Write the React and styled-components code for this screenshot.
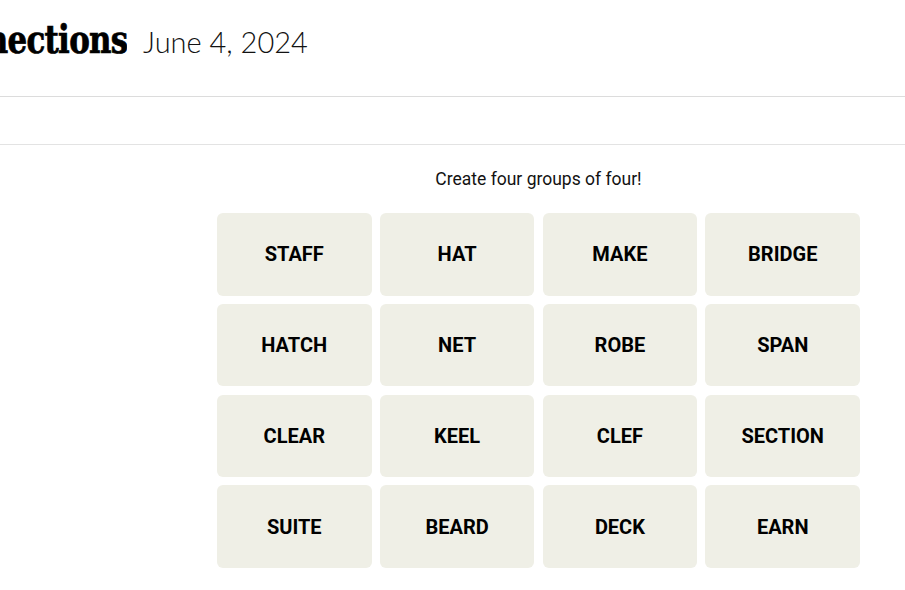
import React from 'react'
import styled, { createGlobalStyle } from 'styled-components'

const GlobalStyle = createGlobalStyle`
  html, body {
    margin: 0;
    padding: 0;
    background: #ffffff;
    overflow: hidden;
  }
  body {
    font-family: Roboto, "Liberation Sans", sans-serif;
    color: #000;
  }
`

const words = [
  'STAFF', 'HAT', 'MAKE', 'BRIDGE',
  'HATCH', 'NET', 'ROBE', 'SPAN',
  'CLEAR', 'KEEL', 'CLEF', 'SECTION',
  'SUITE', 'BEARD', 'DECK', 'EARN',
]

const Header = styled.header`
  height: 97px;
  box-sizing: border-box;
  display: flex;
  align-items: baseline;
  padding-top: 20px;
  border-bottom: 1px solid #dcdcdc;
`

const TitleClip = styled.div`
  width: 127px;
  display: flex;
  justify-content: flex-end;
  overflow: hidden;
`

const Title = styled.h1`
  margin: 0;
  white-space: nowrap;
  font-family: "DejaVu Serif Condensed", "DejaVu Serif", "Liberation Serif", serif;
  font-stretch: condensed;
  font-weight: 700;
  font-size: 39px;
  line-height: 1;
  letter-spacing: -0.8px;
  -webkit-text-stroke: 0.7px #000;
  transform: scaleX(0.88);
  transform-origin: right center;
`

const DateText = styled.span`
  margin-left: 16px;
  font-family: Lato, "Open Sans", sans-serif;
  font-weight: 300;
  font-size: 29px;
  line-height: 1;
  color: #121212;
`

const Toolbar = styled.div`
  height: 47px;
  border-bottom: 1px solid #e3e3e3;
`

const Main = styled.main`
  margin-left: 217px;
  width: 643px;
  padding-top: 24px;
`

const Prompt = styled.p`
  margin: 0 0 23px;
  text-align: center;
  font-size: 17.5px;
  line-height: 21px;
  color: #121212;
`

const Board = styled.div`
  display: grid;
  grid-template-columns: repeat(4, 1fr);
  grid-auto-rows: 82.5px;
  gap: 8.3px;
`

const Tile = styled.button`
  border: none;
  margin: 0;
  padding: 0;
  border-radius: 6px;
  background: #efefe6;
  color: #000;
  font-family: Roboto, "Liberation Sans", sans-serif;
  font-weight: 700;
  font-size: 20px;
  text-transform: uppercase;
  display: flex;
  align-items: center;
  justify-content: center;
`

export default function App() {
  return (
    <>
      <GlobalStyle />
      <Header>
        <TitleClip>
          <Title>Connections</Title>
        </TitleClip>
        <DateText>June 4, 2024</DateText>
      </Header>
      <Toolbar />
      <Main>
        <Prompt>Create four groups of four!</Prompt>
        <Board>
          {words.map(w => (
            <Tile key={w}>{w}</Tile>
          ))}
        </Board>
      </Main>
    </>
  )
}
